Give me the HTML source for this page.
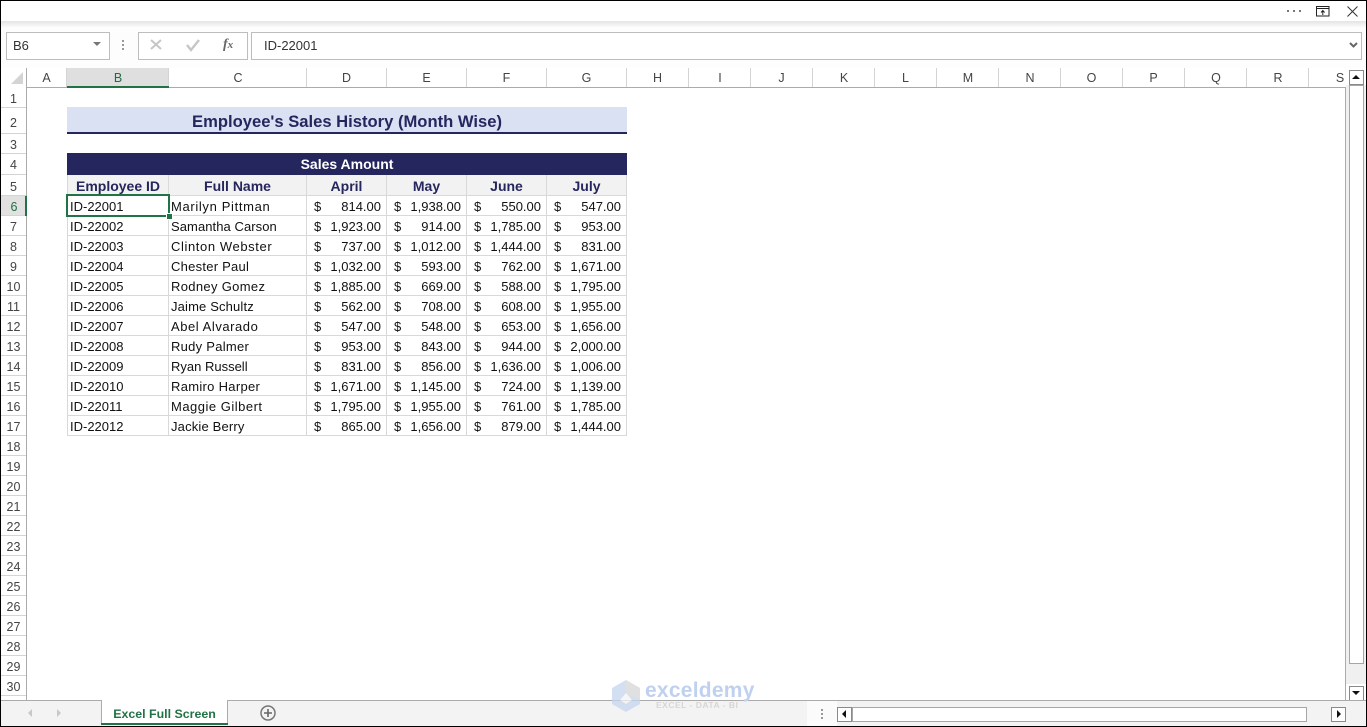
<!DOCTYPE html>
<html><head><meta charset="utf-8"><style>
html,body{margin:0;padding:0;width:1367px;height:727px;overflow:hidden;background:#fff;font-family:"Liberation Sans",sans-serif}
#w{position:relative;width:1367px;height:727px;overflow:hidden}
#w div,#w svg{position:absolute}
.ch{top:68px;height:19px;line-height:20px;text-align:center;font-size:12.5px;color:#444;border-right:1px solid #d4d4d4;box-sizing:border-box}
.p{padding-left:1px}
.rh{left:1px;width:25px;text-align:center;font-size:12.5px;color:#444;border-bottom:1px solid #d4d4d4;box-sizing:border-box;height:20px;line-height:22px}
table{position:absolute;left:67px;top:175px;border-collapse:separate;border-spacing:0;table-layout:fixed;width:560px;font-size:13px;color:#111}
td{box-sizing:border-box;height:20px;padding:2px 0 0 2px;border-right:1px solid #d9d9d9;border-bottom:1px solid #d9d9d9;white-space:nowrap;overflow:hidden;line-height:17px}
td:first-child{border-left:1px solid #d9d9d9;padding-left:2px}
tr.h td{height:21px;background:#f2f2f2;font-weight:bold;text-align:center;color:#26265f;font-size:14px;padding:2px 0 0 0;line-height:18px}
td.m{padding:2px 5px 0 7px}
td.m span{float:left}
td.m{text-align:right}
</style></head><body><div id="w">

<div style="left:0;top:21px;width:1367px;height:6px;background:linear-gradient(#e4e4e4,#fafafa)"></div>
<div style="left:0;top:27px;width:1367px;height:41px;background:#fdfdfd"></div>

<div style="left:1287px;top:10px;width:2px;height:2px;background:#777;box-shadow:6px 0 #777,12px 0 #777"></div>
<svg style="left:1316px;top:6px" width="14" height="11" viewBox="0 0 14 11"><path d="M.5 .5h12.500v9.500H.5zM.5 2.500h12.500" fill="none" stroke="#222"/><path d="M6.800 9V4.500M5 6.500l1.800-2 1.800 2" fill="none" stroke="#222"/></svg>
<svg style="left:1346px;top:5px" width="13" height="13" viewBox="0 0 13 13"><path d="M1.500 1.500l10 10M11.500 1.500l-10 10" stroke="#333" fill="none"/></svg>

<div style="left:6px;top:32px;width:102px;height:26px;border:1px solid #bdbdbd;background:#fff;font-size:13px;line-height:26px;color:#333;text-indent:6px">B6</div>
<svg style="left:93px;top:42px" width="10" height="6"><path d="M0 0h8l-4 4z" fill="#777"/></svg>
<div style="left:122px;top:40px;width:2px;height:2px;background:#999;box-shadow:0 4px #999,0 8px #999"></div>
<div style="left:138px;top:32px;width:108px;height:26px;border:1px solid #bdbdbd;background:#fff"></div>
<svg style="left:150px;top:39px" width="14" height="12"><path d="M1 1l10 9M11 1L1 10" stroke="#c6c6c6" stroke-width="2" fill="none"/></svg>
<svg style="left:186px;top:39px" width="15" height="13"><path d="M1 6l4 5 8-10" stroke="#c6c6c6" stroke-width="2.400" fill="none"/></svg>
<div style="left:223px;top:37px;font:italic bold 14px 'Liberation Serif',serif;color:#666;white-space:nowrap">f<span style="font-size:11px">x</span></div>
<div style="left:251px;top:32px;width:1109px;height:26px;border:1px solid #bdbdbd;background:#fff;font-size:13px;line-height:26px;color:#333;text-indent:12px">ID-22001</div>
<svg style="left:1349px;top:42px" width="10" height="7"><path d="M1 1l3.500 3.500L8 1" stroke="#666" stroke-width="2" fill="none"/></svg>

<svg style="left:10px;top:71px" width="14" height="14"><path d="M13 1v12H1z" fill="#d4d4d4"/></svg>
<div class="ch" style="left:27px;width:40px">A</div>
<div class="ch p" style="left:67px;width:102px;background:#dfdfdf;color:#1f6e43">B</div>
<div class="ch p" style="left:169px;width:138px">C</div>
<div class="ch" style="left:307px;width:80px">D</div>
<div class="ch" style="left:387px;width:80px">E</div>
<div class="ch" style="left:467px;width:80px">F</div>
<div class="ch" style="left:547px;width:80px">G</div>
<div class="ch" style="left:627px;width:62px">H</div>
<div class="ch p" style="left:689px;width:62px">I</div>
<div class="ch" style="left:751px;width:62px">J</div>
<div class="ch p" style="left:813px;width:62px">K</div>
<div class="ch" style="left:875px;width:62px">L</div>
<div class="ch p" style="left:937px;width:62px">M</div>
<div class="ch p" style="left:999px;width:62px">N</div>
<div class="ch" style="left:1061px;width:62px">O</div>
<div class="ch" style="left:1123px;width:62px">P</div>
<div class="ch p" style="left:1185px;width:62px">Q</div>
<div class="ch p" style="left:1247px;width:62px">R</div>
<div class="ch" style="left:1309px;width:62px;border:0">S</div>
<div style="left:26px;top:87px;width:1320px;height:1px;background:#ababab"></div>
<div style="left:67px;top:86px;width:102px;height:2px;background:#217346"></div>
<div style="left:26px;top:68px;width:1px;height:632px;background:#ababab"></div>
<div style="left:1345px;top:87px;width:1px;height:614px;background:#ababab"></div>

<div class="rh" style="top:88px">1</div>
<div class="rh" style="top:108px;height:26px;line-height:31px">2</div>
<div class="rh" style="top:134px">3</div>
<div class="rh" style="top:154px;height:21px">4</div>
<div class="rh" style="top:175px;height:21px;line-height:24px">5</div>
<div class="rh" style="top:196px;background:#e1e1e1;color:#1f6e43;width:26px">6</div>
<div class="rh" style="top:216px">7</div>
<div class="rh" style="top:236px">8</div>
<div class="rh" style="top:256px">9</div>
<div class="rh" style="top:276px">10</div>
<div class="rh" style="top:296px">11</div>
<div class="rh" style="top:316px">12</div>
<div class="rh" style="top:336px">13</div>
<div class="rh" style="top:356px">14</div>
<div class="rh" style="top:376px">15</div>
<div class="rh" style="top:396px">16</div>
<div class="rh" style="top:416px">17</div>
<div class="rh" style="top:436px">18</div>
<div class="rh" style="top:456px">19</div>
<div class="rh" style="top:476px">20</div>
<div class="rh" style="top:496px">21</div>
<div class="rh" style="top:516px">22</div>
<div class="rh" style="top:536px">23</div>
<div class="rh" style="top:556px">24</div>
<div class="rh" style="top:576px">25</div>
<div class="rh" style="top:596px">26</div>
<div class="rh" style="top:616px">27</div>
<div class="rh" style="top:636px">28</div>
<div class="rh" style="top:656px">29</div>
<div class="rh" style="top:676px">30</div>
<div style="left:25px;top:196px;width:2px;height:20px;background:#217346"></div>

<div style="left:67px;top:107px;width:560px;height:25px;background:#d9e1f2;text-align:center;font-weight:bold;font-size:16.6px;line-height:29px;color:#26265f">Employee's Sales History (Month Wise)</div>
<div style="left:67px;top:132px;width:560px;height:2px;background:#26265f"></div>
<div style="left:67px;top:153px;width:560px;height:22px;background:#26265f;text-align:center;font-weight:bold;font-size:14px;line-height:23px;color:#fff">Sales Amount</div>

<table><colgroup><col style="width:102px"><col style="width:138px"><col style="width:80px"><col style="width:80px"><col style="width:80px"><col style="width:80px"></colgroup>
<tr class="h"><td>Employee ID</td><td>Full Name</td><td>April</td><td>May</td><td>June</td><td>July</td></tr>
<tr><td>ID-22001</td><td style="letter-spacing:.65px">Marilyn Pittman</td><td class="m"><span>$</span>814.00</td><td class="m"><span>$</span>1,938.00</td><td class="m"><span>$</span>550.00</td><td class="m"><span>$</span>547.00</td></tr>
<tr><td>ID-22002</td><td style="letter-spacing:.07px">Samantha Carson</td><td class="m"><span>$</span>1,923.00</td><td class="m"><span>$</span>914.00</td><td class="m"><span>$</span>1,785.00</td><td class="m"><span>$</span>953.00</td></tr>
<tr><td>ID-22003</td><td style="letter-spacing:.6px">Clinton Webster</td><td class="m"><span>$</span>737.00</td><td class="m"><span>$</span>1,012.00</td><td class="m"><span>$</span>1,444.00</td><td class="m"><span>$</span>831.00</td></tr>
<tr><td>ID-22004</td><td style="letter-spacing:.25px">Chester Paul</td><td class="m"><span>$</span>1,032.00</td><td class="m"><span>$</span>593.00</td><td class="m"><span>$</span>762.00</td><td class="m"><span>$</span>1,671.00</td></tr>
<tr><td>ID-22005</td><td style="letter-spacing:.33px">Rodney Gomez</td><td class="m"><span>$</span>1,885.00</td><td class="m"><span>$</span>669.00</td><td class="m"><span>$</span>588.00</td><td class="m"><span>$</span>1,795.00</td></tr>
<tr><td>ID-22006</td><td style="letter-spacing:.15px">Jaime Schultz</td><td class="m"><span>$</span>562.00</td><td class="m"><span>$</span>708.00</td><td class="m"><span>$</span>608.00</td><td class="m"><span>$</span>1,955.00</td></tr>
<tr><td>ID-22007</td><td style="letter-spacing:.55px">Abel Alvarado</td><td class="m"><span>$</span>547.00</td><td class="m"><span>$</span>548.00</td><td class="m"><span>$</span>653.00</td><td class="m"><span>$</span>1,656.00</td></tr>
<tr><td>ID-22008</td><td style="letter-spacing:.27px">Rudy Palmer</td><td class="m"><span>$</span>953.00</td><td class="m"><span>$</span>843.00</td><td class="m"><span>$</span>944.00</td><td class="m"><span>$</span>2,000.00</td></tr>
<tr><td>ID-22009</td><td>Ryan Russell</td><td class="m"><span>$</span>831.00</td><td class="m"><span>$</span>856.00</td><td class="m"><span>$</span>1,636.00</td><td class="m"><span>$</span>1,006.00</td></tr>
<tr><td>ID-22010</td><td style="letter-spacing:.3px">Ramiro Harper</td><td class="m"><span>$</span>1,671.00</td><td class="m"><span>$</span>1,145.00</td><td class="m"><span>$</span>724.00</td><td class="m"><span>$</span>1,139.00</td></tr>
<tr><td>ID-22011</td><td style="letter-spacing:.5px">Maggie Gilbert</td><td class="m"><span>$</span>1,795.00</td><td class="m"><span>$</span>1,955.00</td><td class="m"><span>$</span>761.00</td><td class="m"><span>$</span>1,785.00</td></tr>
<tr><td>ID-22012</td><td style="letter-spacing:.17px">Jackie Berry</td><td class="m"><span>$</span>865.00</td><td class="m"><span>$</span>1,656.00</td><td class="m"><span>$</span>879.00</td><td class="m"><span>$</span>1,444.00</td></tr>
</table>
<div style="left:66px;top:194px;box-sizing:border-box;width:104px;height:23px;border:2px solid #217346"></div>
<div style="left:166px;top:213px;width:5px;height:5px;background:#217346;border:1px solid #fff"></div>

<!-- vertical scrollbar -->
<div style="left:1346px;top:68px;width:20px;height:633px;background:#f0f0f0"></div>
<div style="left:1346px;top:68px;width:20px;height:17px;background:#fff"></div>
<div style="left:1349px;top:70px;width:13px;height:13px;border:1px solid #8a8a8a;background:#fff"></div>
<svg style="left:1352px;top:74px" width="9" height="6"><path d="M0 5h8L4 1z" fill="#111"/></svg>
<div style="left:1349px;top:85px;width:13px;height:577px;border:1px solid #a6a6a6;background:#fff"></div>
<div style="left:1346px;top:684px;width:20px;height:17px;background:#fff"></div>
<div style="left:1349px;top:686px;width:13px;height:13px;border:1px solid #8a8a8a;background:#fff"></div>
<svg style="left:1352px;top:691px" width="9" height="6"><path d="M0 0h8L4 4z" fill="#111"/></svg>

<!-- bottom bar -->
<div style="left:0;top:700px;width:1367px;height:1px;background:#ababab"></div>
<div style="left:0;top:701px;width:1367px;height:25px;background:#f3f3f3"></div>
<svg style="left:27px;top:708px" width="6" height="10"><path d="M5 1v8L1 5z" fill="#c8c8c8"/></svg>
<svg style="left:56px;top:708px" width="6" height="10"><path d="M1 1v8l4-4z" fill="#c8c8c8"/></svg>
<div style="left:101px;top:700px;width:125px;height:25px;background:#fff;border-left:1px solid #ababab;border-right:1px solid #ababab;text-align:center;font-weight:bold;font-size:12.4px;line-height:28px;color:#217346">Excel Full Screen</div>
<div style="left:101px;top:723px;width:127px;height:2px;background:#217346"></div>
<svg style="left:259px;top:704px" width="18" height="18"><circle cx="9" cy="9" r="7" fill="none" stroke="#777" stroke-width="1.500"/><path d="M9 5v8M5 9h8" stroke="#666" stroke-width="1.600"/></svg>
<div style="left:807px;top:701px;width:30px;height:25px;background:#fbfbfb"></div>
<div style="left:821px;top:709px;width:2px;height:2px;background:#999;box-shadow:0 4px #999,0 8px #999"></div>
<div style="left:837px;top:707px;width:13px;height:13px;border:1px solid #8a8a8a;background:#fff"></div>
<svg style="left:841px;top:710px" width="6" height="9"><path d="M5 0v8L1 4z" fill="#111"/></svg>
<div style="left:852px;top:707px;width:453px;height:13px;border:1px solid #a6a6a6;background:#fff"></div>
<div style="left:1331px;top:707px;width:13px;height:13px;border:1px solid #8a8a8a;background:#fff"></div>
<svg style="left:1336px;top:710px" width="6" height="9"><path d="M1 0v8l4-4z" fill="#111"/></svg>

<!-- watermark -->
<svg style="left:611px;top:679px;opacity:.75" width="30" height="34" viewBox="0 0 30 34"><path d="M15 1l14 8v16l-14 8-14-8V9z" fill="#c5d5ee"/><path d="M15 1l14 8v12l-14-7z" fill="#d6d6d6"/><path d="M9 21l6-7 6 7-6 4z" fill="#f4f4f4"/></svg>
<div style="left:645px;top:678px;font-weight:bold;font-size:21px;line-height:26px;letter-spacing:.25px;color:#c0d1ef;white-space:nowrap">exceldemy</div>
<div style="left:656px;top:700px;font-weight:bold;font-size:8.5px;line-height:10px;letter-spacing:.5px;color:#d6d6d6;white-space:nowrap">EXCEL - DATA - BI</div>

<!-- window border -->
<div style="left:0;top:0;width:1367px;height:1px;background:#000"></div>
<div style="left:0;top:726px;width:1367px;height:1px;background:#000"></div>
<div style="left:0;top:0;width:1px;height:727px;background:#000"></div>
<div style="left:1366px;top:0;width:1px;height:727px;background:#000"></div>
</div></body></html>
